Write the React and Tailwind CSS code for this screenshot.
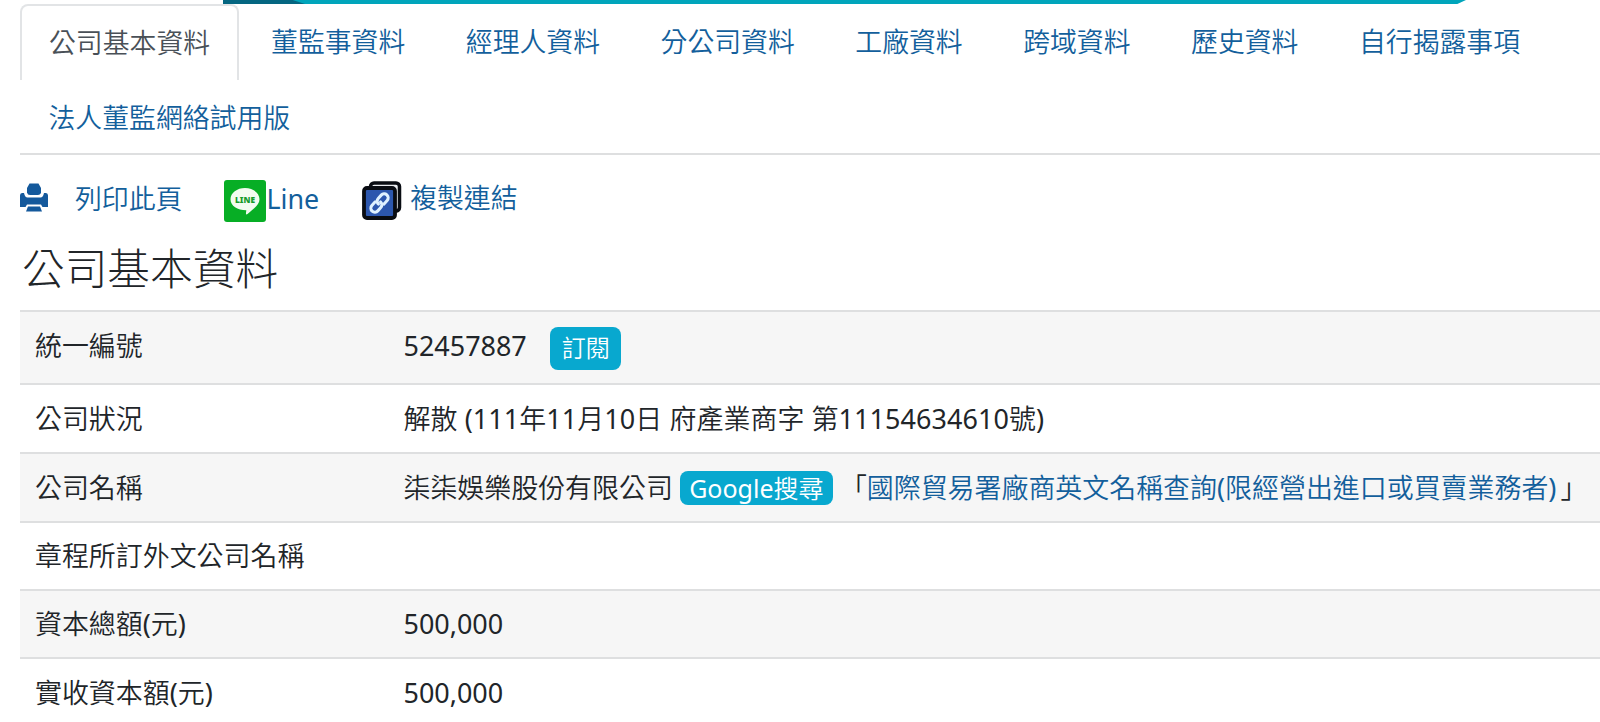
import React from 'react';

const tabs = [
  '董監事資料',
  '經理人資料',
  '分公司資料',
  '工廠資料',
  '跨域資料',
  '歷史資料',
  '自行揭露事項',
  '法人董監網絡試用版',
];

function PrintIcon() {
  return (
    <svg width="28" height="29" viewBox="0 0 28 29" fill="#14599c">
      <path d="M9.500 0.500h9l2.500 4.500v5q-1 2-3 2h-8q-2.500 0-3-2.500v-4.500z" />
      <path d="M0 12.500q0-2.500 2-2.500h2q1 4.500 3.500 4.500h13q2.500 0 3.500-4.500h2q2 0 2 2.500v11.500h-5.500l-1.500-2.500h-14l-1.500 2.500h-5.500z" />
      <path d="M8 23.500h12l2 5h-16z" />
    </svg>
  );
}

function LineIcon() {
  return (
    <svg width="42" height="42" viewBox="0 0 42 42">
      <rect width="42" height="42" rx="3" fill="#07ae25" />
      <path
        d="M21 8c8 0 14.500 4.900 14.500 11.200 0 5.500-5.500 9.300-12 14.800-1.200.8-1.700.3-1.500-1l.3-2.800C13.500 30.200 6.500 26 6.500 19.200 6.500 12.900 13 8 21 8z"
        fill="#f2fcf0"
      />
      <text x="21" y="23" textAnchor="middle" textLength="20" lengthAdjust="spacingAndGlyphs" fill="#159b2b" className="font-['Noto_Sans',sans-serif] text-[9px] font-black">
        LINE
      </text>
    </svg>
  );
}

function CopyIcon() {
  return (
    <svg width="40" height="40" viewBox="0 0 40 40" fill="none">
      <rect x="8.500" y="2" width="29" height="28" rx="3.500" fill="#e9ebef" stroke="#090c12" strokeWidth="3.500" />
      <rect x="2" y="7" width="31" height="30" rx="3" fill="#2c57ae" stroke="#090c12" strokeWidth="3.800" />
      <g stroke="#dff1ff" strokeWidth="3" strokeLinecap="round" transform="rotate(-48 17.500 22)">
        <path d="M15.500 18h-5a4 4 0 0 0 0 8h4.500a4 4 0 0 0 4-4" />
        <path d="M19.500 26h5a4 4 0 0 0 0-8h-4.500a4 4 0 0 0-4 4" />
      </g>
    </svg>
  );
}

function Row({ label, striped, className, children }) {
  return (
    <div className={`flex items-center border-t-2 border-[#dedfe0] pl-[15px] ${striped ? 'bg-[#f6f6f6]' : 'bg-white'} ${className}`}>
      <div className="w-[368.500px] shrink-0">{label}</div>
      <div className="flex items-center whitespace-nowrap">{children}</div>
    </div>
  );
}

function Latin({ children }) {
  return <span className="font-normal">{children}</span>;
}

export default function App() {
  return (
    <div className="h-[722px] w-[1600px] overflow-hidden bg-white font-['Noto_Sans','Noto_Sans_CJK_TC',sans-serif] text-[26.850px] font-[350] leading-[40px] text-[#212529]">
      <div className="ml-[223px] flex h-[4px] w-[1243px] overflow-hidden bg-[#00a5bb] [clip-path:polygon(0_0,100%_0,99.300%_100%,0_100%)]">
        <div className="h-full w-[82px] bg-[#056681] [clip-path:polygon(0_0,85%_0,100%_100%,0_100%)]" />
      </div>

      <nav className="ml-[20px] flex h-[151px] flex-wrap content-start gap-x-[3.500px] border-b-2 border-[#dedfe0] text-[#135f9c]">
        <a className="h-[76px] rounded-t-[8px] border-2 border-b-0 border-[#e2e4e6] px-[27px] pt-[17px] text-[#495057]">公司基本資料</a>
        {tabs.map((tab) => (
          <a key={tab} className="h-[75px] px-[28.500px] pt-[18px]">
            {tab}
          </a>
        ))}
      </nav>

      <div className="ml-[20px] flex h-[88px] items-center text-[#135f9c]">
        <span className="-mt-[3px]">
          <PrintIcon />
        </span>
        <span className="ml-[27px]">列印此頁</span>
        <span className="ml-[42px] mt-[4px]">
          <LineIcon />
        </span>
        <Latin>Line</Latin>
        <span className="ml-[43px] mt-[4px]">
          <CopyIcon />
        </span>
        <span className="-mt-[2px] ml-[8px]">複製連結</span>
      </div>

      <h1 className="ml-[22px] h-[67px] text-[42.700px] font-light leading-[52px]">公司基本資料</h1>

      <div className="ml-[20px] text-[26.950px]">
        <Row label="統一編號" striped className="h-[73px] pb-[4px]">
          <Latin>52457887</Latin>
          <button className="ml-[23.500px] mt-[5px] h-[43px] w-[71px] rounded-[8px] bg-[#08a8cf] text-[24px] text-white">訂閱</button>
        </Row>
        <Row label="公司狀況" className="h-[69px]">
          <span className="tracking-[0.080px]">
            解散 <Latin>(111</Latin>年<Latin>11</Latin>月<Latin>10</Latin>日 府產業商字 第<Latin>11154634610</Latin>號<Latin>)</Latin>
          </span>
        </Row>
        <Row label="公司名稱" striped className="h-[69px]">
          <span>柒柒娛樂股份有限公司</span>
          <button className="ml-[7px] h-[34px] w-[153px] rounded-[8px] bg-[#08a8cf] text-[25px] leading-[34px] text-white">
            <Latin>Google</Latin>搜尋
          </button>
          <span className="ml-[7px]">「</span>
          <a className="text-[#135f9c]">
            國際貿易署廠商英文名稱查詢<Latin>(</Latin>限經營出進口或買賣業務者<Latin>)</Latin>
          </a>
          <span className="ml-[4px]">」</span>
        </Row>
        <Row label="章程所訂外文公司名稱" className="h-[68px]" />
        <Row label={<>資本總額<Latin>(</Latin>元<Latin>)</Latin></>} striped className="h-[68px]">
          <Latin>500,000</Latin>
        </Row>
        <Row label={<>實收資本額<Latin>(</Latin>元<Latin>)</Latin></>} className="h-[69px]">
          <Latin>500,000</Latin>
        </Row>
      </div>
    </div>
  );
}
